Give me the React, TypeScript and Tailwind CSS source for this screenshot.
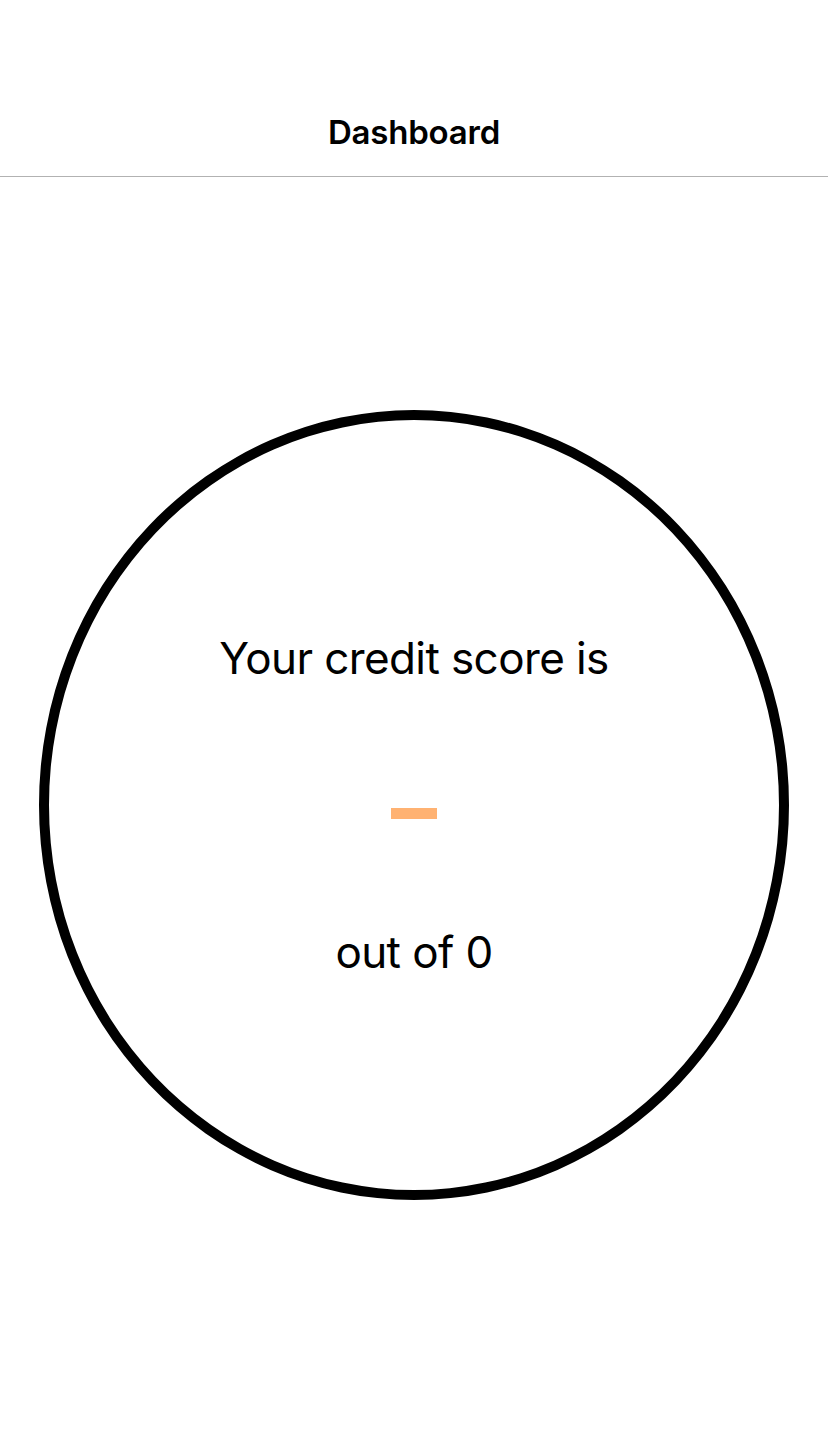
export default function App() {
  return (
    <div
      className="w-[828px] h-[1432px] bg-white flex flex-col text-black"
      style={{ fontFamily: 'Inter, "Liberation Sans", sans-serif' }}
    >
      <header className="h-[177px] shrink-0 flex items-end justify-center border-b border-[#b2b2b2]">
        <h1 className="text-[33px] font-semibold leading-none mb-[27px] tracking-[-0.2px]">Dashboard</h1>
      </header>
      <main className="flex-1 flex items-center justify-center">
        <div className="w-[750px] h-[790px] rounded-[50%] border-[10px] border-black flex flex-col items-center">
          <p className="mt-[216px] text-[44px] leading-none tracking-[-0.6px]">Your credit score is</p>
          <div className="mt-[128px] w-[46px] h-[11px] bg-[#ffb272]" />
          <p className="mt-[111px] text-[44px] leading-none tracking-[-0.6px]">out of 0</p>
        </div>
      </main>
    </div>
  );
}
